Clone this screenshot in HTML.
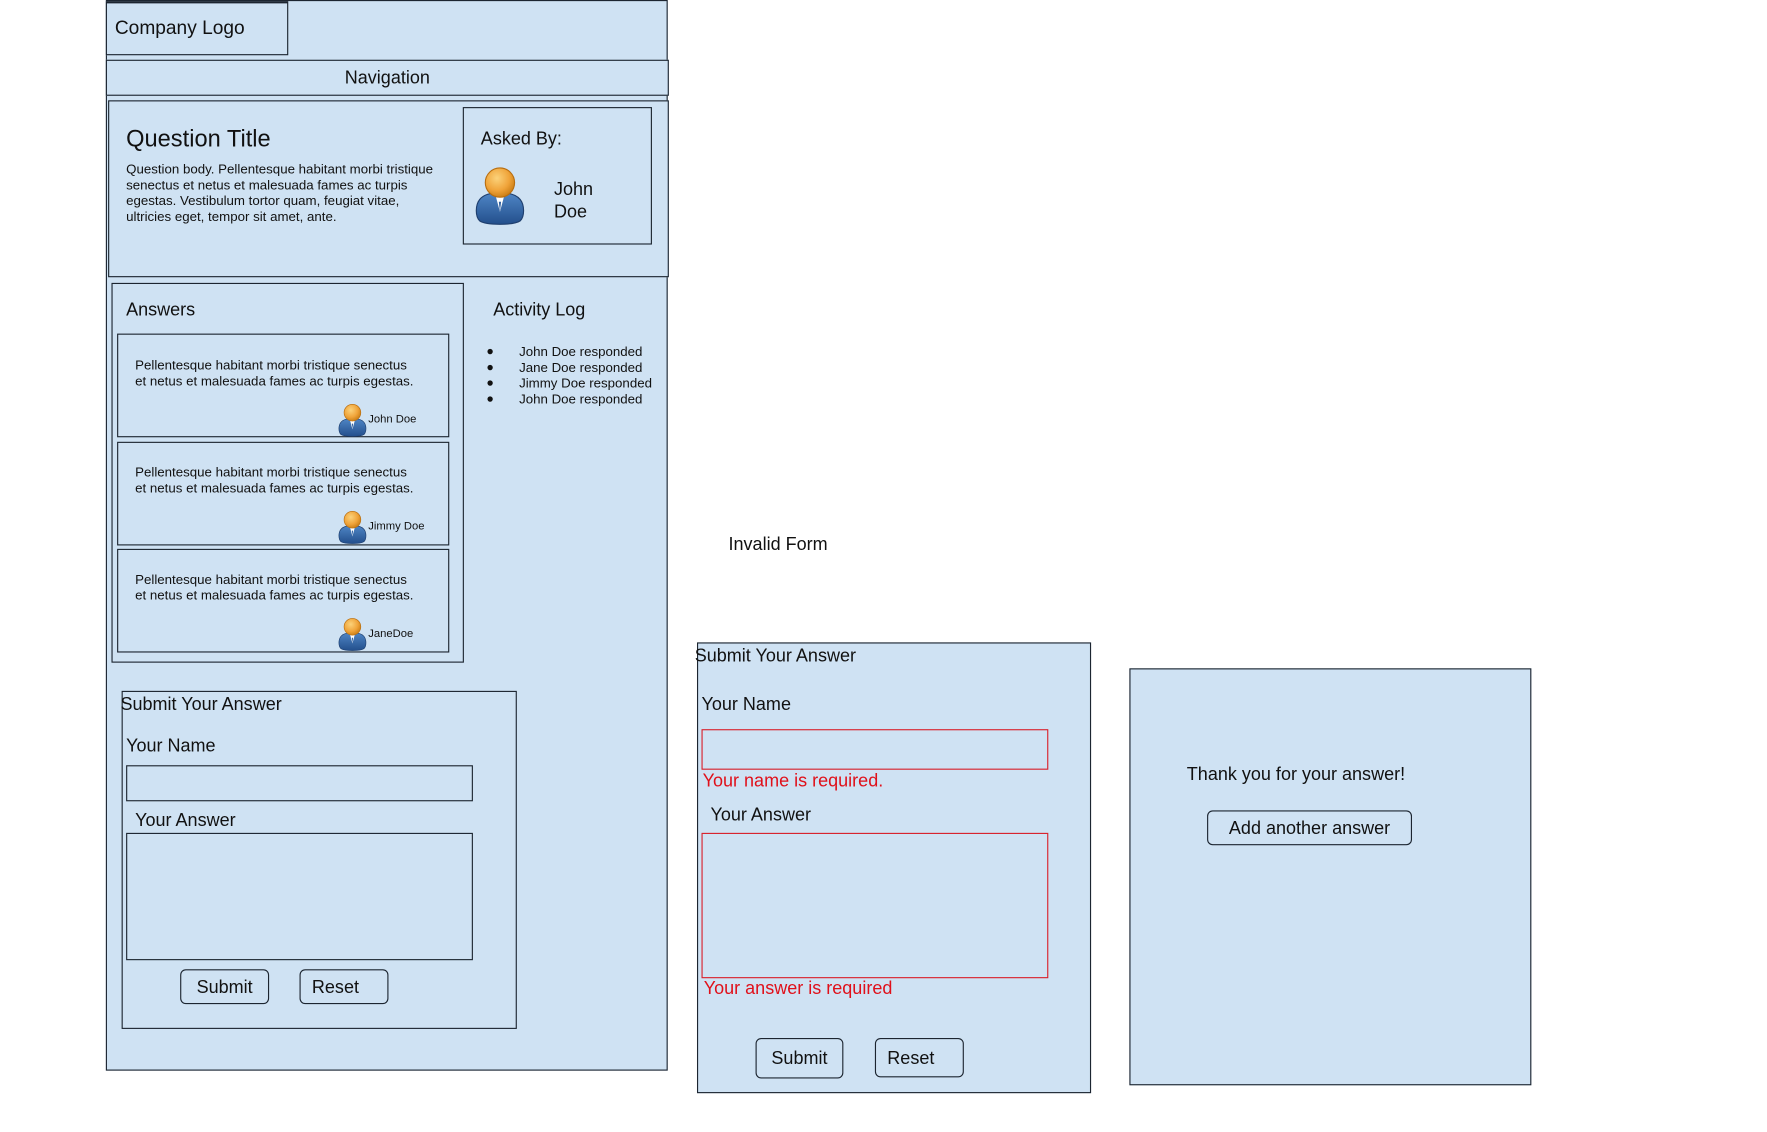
<!DOCTYPE html>
<html><head><meta charset="utf-8"><style>
html,body{margin:0;padding:0;background:#fff;width:1767px;height:1131px;overflow:hidden}
#w{position:absolute;left:0;top:0;width:1570px;height:1004px;transform:scale(1.126,1.127);transform-origin:0 0;font-family:"Liberation Sans",sans-serif;color:#111}
.b{position:absolute;background:#cfe2f3;border:1px solid #1c2530;box-sizing:border-box}
.t{position:absolute;white-space:nowrap;line-height:1}
.r{border-color:#d9202a}
.btn{position:absolute;border:1px solid #1c2530;border-radius:5px;box-sizing:border-box;background:#cfe2f3;font-size:16px;text-align:center}
.s{font-size:11px;line-height:14px}
.a{font-size:11.8px;line-height:14px}
.err{color:#e0101a;font-size:16px}
</style></head><body><div id="w">
<svg width="0" height="0" style="position:absolute"><defs>
<radialGradient id="hg" cx="0.4" cy="0.35" r="0.7"><stop offset="0" stop-color="#fbd27a"/><stop offset="0.6" stop-color="#f0a43a"/><stop offset="1" stop-color="#c77a12"/></radialGradient>
<linearGradient id="bg" x1="0" y1="0" x2="0" y2="1"><stop offset="0" stop-color="#4f86c6"/><stop offset="1" stop-color="#234f8c"/></linearGradient>
<symbol id="av" viewBox="0 0 48 56"><path d="M6 50 C2 46 2 36 6 31 C10 26 17 25 24 25 C31 25 38 26 42 31 C46 36 46 46 42 50 C36 54 12 54 6 50Z" fill="url(#bg)" stroke="#1f3f6e" stroke-width="1"/><path d="M20 27 L24 42 L28 27Z" fill="#fff"/><path d="M23 33 L24 42 L25 33Z" fill="#2f5f9e"/><circle cx="24" cy="16" r="13" fill="url(#hg)" stroke="#b86e10" stroke-width="1"/></symbol>
</defs></svg>

<div class="b" style="left:94px;top:0;width:499px;height:950px"></div>
<div class="b" style="left:94px;top:1px;width:162px;height:48px;border-top:2px solid #1c2530"></div>
<div class="t" style="left:102px;top:16px;font-size:17px">Company Logo</div>
<div class="b" style="left:94px;top:53px;width:500px;height:32px"></div>
<div class="t" style="left:94px;width:500px;text-align:center;top:62px;font-size:16px">Navigation</div>

<div class="b" style="left:96px;top:89px;width:498px;height:157px"></div>
<div class="t" style="left:112px;top:113px;font-size:21px">Question Title</div>
<div class="t a" style="left:112px;top:143px;white-space:normal;width:282px">Question body. Pellentesque habitant morbi tristique senectus et netus et malesuada fames ac turpis egestas. Vestibulum tortor quam, feugiat vitae, ultricies eget, tempor sit amet, ante.</div>
<div class="b" style="left:411px;top:95px;width:168px;height:122px"></div>
<div class="t" style="left:427px;top:116px;font-size:16px">Asked By:</div>
<svg style="position:absolute;left:420px;top:146px" width="48" height="56"><use href="#av"/></svg>
<div class="t" style="left:492px;top:159px;font-size:16px;line-height:20px">John<br>Doe</div>

<div class="b" style="left:99px;top:251px;width:313px;height:337px"></div>
<div class="t" style="left:112px;top:268px;font-size:16px">Answers</div>
<div class="b" style="left:104px;top:296px;width:295px;height:92px"></div>
<div class="t a" style="left:120px;top:317px">Pellentesque habitant morbi tristique senectus<br>et netus et malesuada fames ac turpis egestas.</div>
<svg style="position:absolute;left:299px;top:357px" width="28" height="32"><use href="#av"/></svg>
<div class="t" style="left:327px;top:368px;font-size:10px">John Doe</div>
<div class="b" style="left:104px;top:392px;width:295px;height:92px"></div>
<div class="t a" style="left:120px;top:412px">Pellentesque habitant morbi tristique senectus<br>et netus et malesuada fames ac turpis egestas.</div>
<svg style="position:absolute;left:299px;top:452px" width="28" height="32"><use href="#av"/></svg>
<div class="t" style="left:327px;top:463px;font-size:10px">Jimmy Doe</div>
<div class="b" style="left:104px;top:487px;width:295px;height:92px"></div>
<div class="t a" style="left:120px;top:507px">Pellentesque habitant morbi tristique senectus<br>et netus et malesuada fames ac turpis egestas.</div>
<svg style="position:absolute;left:299px;top:547px" width="28" height="32"><use href="#av"/></svg>
<div class="t" style="left:327px;top:558px;font-size:10px">JaneDoe</div>

<div class="t" style="left:438px;top:268px;font-size:16px">Activity Log</div>
<div class="t s" style="left:432px;top:305px">●<br>●<br>●<br>●</div>
<div class="t a" style="left:461px;top:305px">John Doe responded<br>Jane Doe responded<br>Jimmy Doe responded<br>John Doe responded</div>

<div class="b" style="left:108px;top:613px;width:351px;height:300px"></div>
<div class="t" style="left:107px;top:618px;font-size:16px">Submit Your Answer</div>
<div class="t" style="left:112px;top:655px;font-size:16px">Your Name</div>
<div class="b" style="left:112px;top:679px;width:308px;height:32px"></div>
<div class="t" style="left:120px;top:721px;font-size:16px">Your Answer</div>
<div class="b" style="left:112px;top:739px;width:308px;height:113px"></div>
<div class="btn" style="left:160px;top:860px;width:79px;height:31px;line-height:31px">Submit</div>
<div class="btn" style="left:266px;top:860px;width:79px;height:31px;line-height:31px;text-align:left;padding-left:10px">Reset</div>

<div class="t" style="left:647px;top:476px;font-size:16px">Invalid Form</div>
<div class="b" style="left:619px;top:570px;width:350px;height:400px"></div>
<div class="t" style="left:617px;top:575px;font-size:16px">Submit Your Answer</div>
<div class="t" style="left:623px;top:618px;font-size:16px">Your Name</div>
<div class="b r" style="left:623px;top:647px;width:308px;height:36px"></div>
<div class="t err" style="left:624px;top:686px">Your name is required.</div>
<div class="t" style="left:631px;top:716px;font-size:16px">Your Answer</div>
<div class="b r" style="left:623px;top:739px;width:308px;height:129px"></div>
<div class="t err" style="left:625px;top:870px">Your answer is required</div>
<div class="btn" style="left:671px;top:921px;width:78px;height:36px;line-height:36px">Submit</div>
<div class="btn" style="left:777px;top:921px;width:79px;height:35px;line-height:35px;text-align:left;padding-left:10px">Reset</div>

<div class="b" style="left:1003px;top:593px;width:357px;height:370px"></div>
<div class="t" style="left:1054px;top:680px;font-size:16px">Thank you for your answer!</div>
<div class="btn" style="left:1072px;top:719px;width:182px;height:31px;line-height:31px">Add another answer</div>
</div></body></html>
